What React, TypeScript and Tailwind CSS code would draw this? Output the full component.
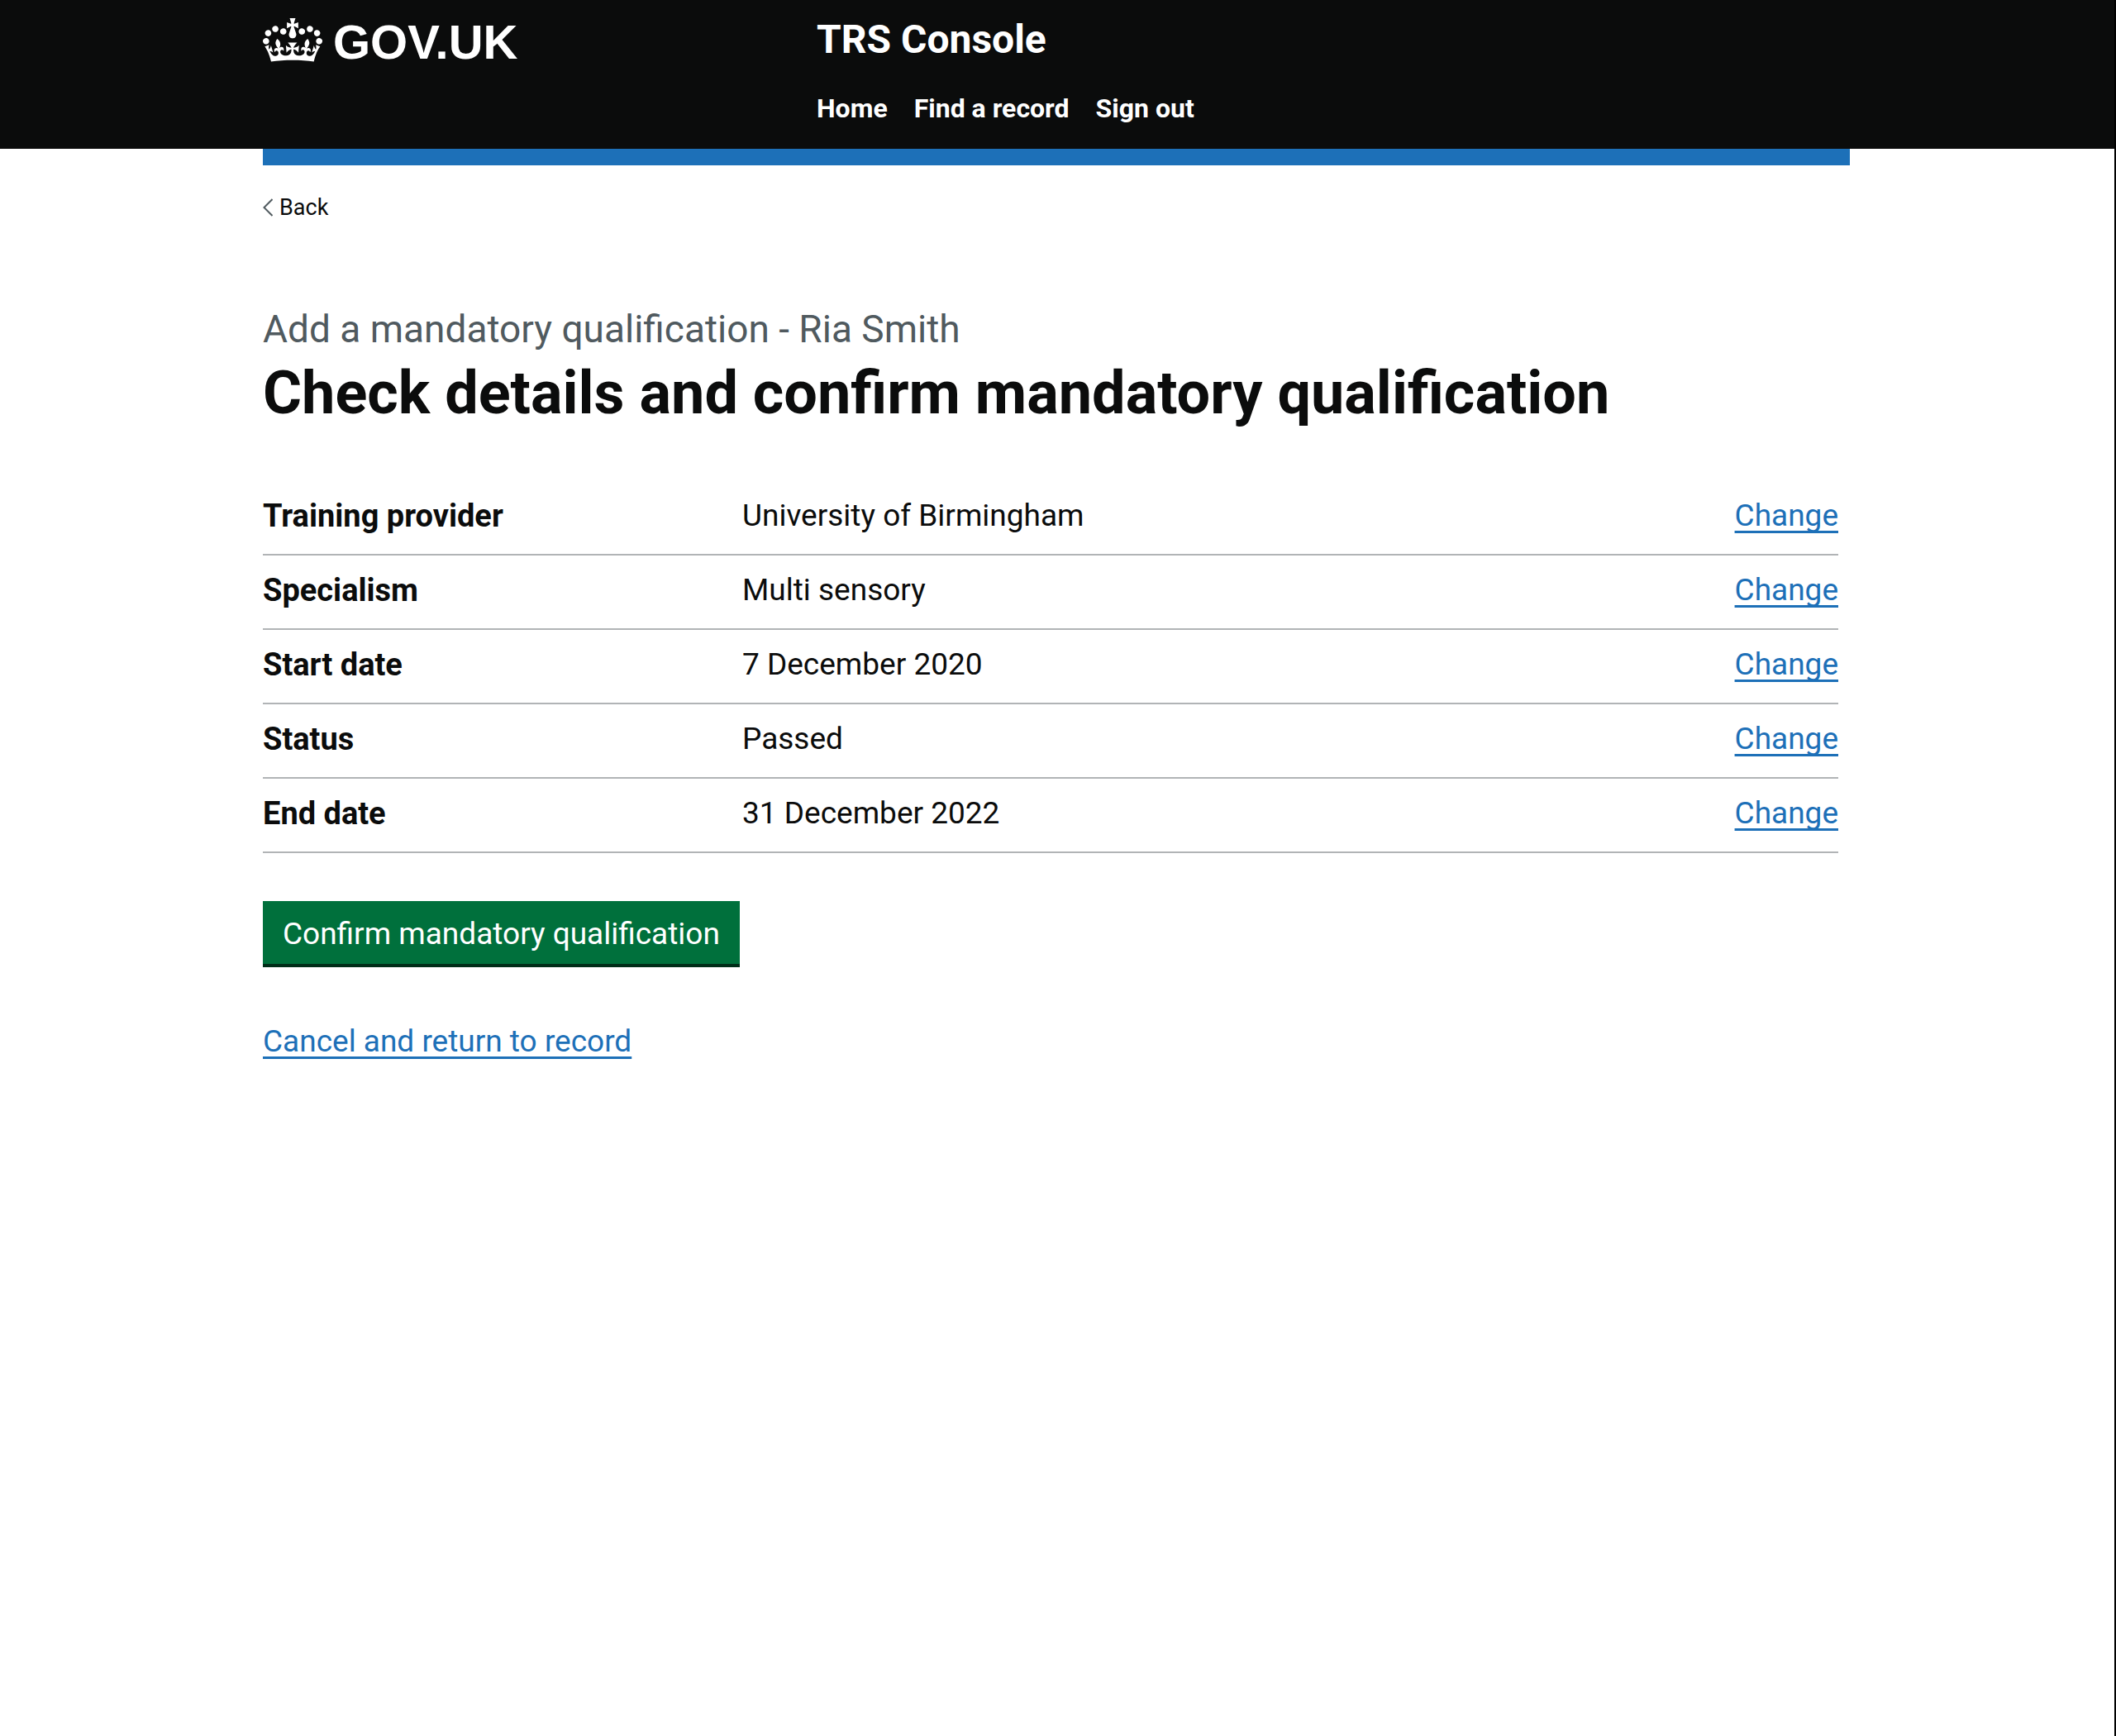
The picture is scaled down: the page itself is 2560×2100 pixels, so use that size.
const details = [
  { label: "Training provider", value: "University of Birmingham" },
  { label: "Specialism", value: "Multi sensory" },
  { label: "Start date", value: "7 December 2020" },
  { label: "Status", value: "Passed" },
  { label: "End date", value: "31 December 2022" },
];

const navigation = ["Home", "Find a record", "Sign out"];

const linkClasses =
  "text-[#1d70b8] underline decoration-[3px] underline-offset-[6px] [text-decoration-skip-ink:none] hover:text-[#003078]";

function Crown() {
  return (
    <svg aria-hidden="true" viewBox="0 0 132 97" className="mt-0.5 h-[53px] w-[72px] shrink-0" fill="currentColor">
      <path
        fillRule="evenodd"
        d="M25 30.2c3.5 1.5 7.7-.2 9.1-3.7 1.5-3.6-.2-7.8-3.9-9.2-3.6-1.4-7.6.3-9.1 3.9-1.4 3.5.3 7.5 3.9 9zM9 39.5c3.6 1.5 7.8-.2 9.2-3.7 1.5-3.6-.2-7.8-3.9-9.1-3.6-1.5-7.6.2-9.1 3.8-1.4 3.5.3 7.5 3.8 9zM4.4 57.2c3.5 1.5 7.7-.2 9.1-3.8 1.5-3.6-.2-7.7-3.9-9.1-3.5-1.5-7.6.3-9.1 3.8-1.4 3.5.3 7.6 3.9 9.1zm38.3-21.4c3.5 1.5 7.7-.2 9.1-3.8 1.5-3.6-.2-7.7-3.9-9.1-3.6-1.5-7.6.3-9.1 3.8-1.3 3.6.4 7.7 3.9 9.1zm64.4-5.6c-3.6 1.5-7.8-.2-9.1-3.7-1.5-3.6.2-7.8 3.8-9.2 3.6-1.4 7.7.3 9.2 3.9 1.3 3.5-.4 7.5-3.9 9zm15.9 9.3c-3.6 1.5-7.7-.2-9.1-3.7-1.5-3.6.2-7.8 3.7-9.1 3.6-1.5 7.7.2 9.2 3.8 1.5 3.5-.3 7.5-3.8 9zm4.7 17.7c-3.6 1.5-7.8-.2-9.2-3.8-1.5-3.6.2-7.7 3.9-9.1 3.6-1.5 7.7.3 9.2 3.8 1.3 3.5-.4 7.6-3.9 9.1zM89.3 35.8c-3.6 1.5-7.8-.2-9.2-3.8-1.4-3.6.2-7.7 3.9-9.1 3.6-1.5 7.7.3 9.2 3.8 1.4 3.6-.3 7.7-3.9 9.1zM69.7 17.7l8.9 4.7V9.3l-8.9 2.8c-.2-.3-.5-.6-.9-.9L72.4 0H59.6l3.5 11.2c-.3.3-.6.5-.9.9l-8.8-2.8v13.1l8.8-4.7c.3.3.6.7.9.9l-5 15.4v.1c-.2.8-.4 1.6-.4 2.4 0 4.1 3.1 7.5 7 8.1h.2c.3 0 .7.1 1 .1.4 0 .7 0 1-.1h.2c4-.6 7.1-4.1 7.1-8.1 0-.8-.1-1.7-.4-2.4V34l-5.1-15.4c.4-.2.7-.6 1-.9zM66 92.8c16.9 0 32.8 1.1 47.1 3.2 4-16.9 8.9-26.7 14-33.5l-9.6-3.4c1 4.9 1.1 7.2 0 10.2-1.5-1.4-3-4.3-4.2-8.7L108.6 76c2.8-2 5-3.2 7.5-3.3-4.4 9.4-10 11.9-13.6 11.2-4.3-.8-6.3-4.6-5.6-7.9 1-4.7 5.7-5.9 8-.5 4.3-8.7-3-11.4-7.6-8.8 7.1-7.2 7.9-13.5 2.1-21.1-8 6.1-8.1 12.3-4.5 20.8-4.7-5.4-12.1-2.5-9.5 6.2 3.4-5.2 7.9-2 7.2 3.1-.6 4.3-6.4 7.8-13.5 7.2-10.3-.9-10.9-8-11.2-13.8 2.5-.5 7.1 1.8 11 7.3L80.2 60c-4.1 4.4-8 5.3-12.3 5.4 1.4-4.4 8-11.6 8-11.6H55.5s6.4 7.2 7.9 11.6c-4.2-.1-8-1-12.3-5.4l1.4 16.4c3.9-5.5 8.5-7.7 10.9-7.3-.3 5.8-.9 12.8-11.1 13.8-7.2.6-12.9-2.9-13.5-7.2-.7-5 3.8-8.3 7.1-3.1 2.7-8.7-4.6-11.6-9.4-6.2 3.7-8.5 3.6-14.7-4.6-20.8-5.8 7.6-5 13.9 2.2 21.1-4.7-2.6-11.9.1-7.7 8.8 2.3-5.5 7.1-4.2 8.1.5.7 3.3-1.3 7.1-5.7 7.9-3.5.7-9-1.8-13.5-11.2 2.5.1 4.7 1.3 7.5 3.3l-4.7-15.4c-1.2 4.4-2.7 7.2-4.3 8.7-1.1-3-.9-5.3 0-10.2l-9.5 3.4c5 6.9 9.9 16.7 14 33.5 14.8-2.1 30.8-3.2 47.7-3.2z"
      />
    </svg>
  );
}

function Header() {
  return (
    <header className="bg-[#0b0c0c] pr-0.5 text-white">
      <div className="mx-auto flex max-w-[1920px] pt-[18px] pb-[29px]">
        <div className="w-[670px] shrink-0 pt-0.5">
          <a href="#" className="inline-flex items-start gap-[13px]">
            <Crown />
            <span className="font-['Liberation_Sans',sans-serif] text-[58px] leading-[62px] font-bold">GOV.UK</span>
          </a>
        </div>
        <div>
          <a href="#" className="block text-[48px] leading-[60px] font-bold">
            TRS Console
          </a>
          <nav aria-label="Menu" className="mt-[33px]">
            <ul className="flex gap-8 text-[32px] leading-[40px] font-bold">
              {navigation.map((item) => (
                <li key={item}>
                  <a href="#">{item}</a>
                </li>
              ))}
            </ul>
          </nav>
        </div>
      </div>
    </header>
  );
}

function BackLink() {
  return (
    <a href="#" className="mt-[31px] inline-flex items-center gap-2 text-[27px] leading-[40px]">
      <svg
        aria-hidden="true"
        viewBox="0 0 12 22"
        className="h-[22px] w-3"
        fill="none"
        stroke="#505a5f"
        strokeWidth="2"
      >
        <path d="M11.5 1 1.5 11l10 10" />
      </svg>
      Back
    </a>
  );
}

function SummaryList() {
  return (
    <dl className="mt-[66px] mr-3.5 text-[37px] leading-[50px]">
      {details.map(({ label, value }) => (
        <div key={label} className="flex border-b-2 border-[#b1b4b6] pt-[17px] pb-[21px]">
          <dt className="w-[580px] shrink-0 text-[38px] font-bold">{label}</dt>
          <dd className="grow">{value}</dd>
          <dd>
            <a href="#" aria-label={`Change ${label.toLowerCase()}`} className={linkClasses}>
              Change
            </a>
          </dd>
        </div>
      ))}
    </dl>
  );
}

export default function App() {
  return (
    <div className="min-h-screen border-r-2 border-black bg-white font-['Roboto',sans-serif] text-[#0b0c0c]">
      <Header />
      <div className="pr-0.5">
        <div className="mx-auto max-w-[1920px]">
          <div className="h-5 bg-[#1d70b8]" />
          <BackLink />
          <main className="mt-[97px]">
            <p className="text-[46px] leading-[60px] text-[#505a5f]">Add a mandatory qualification - Ria Smith</p>
            <h1 className="mt-2 text-[72px] leading-[80px] font-bold">
              Check details and confirm mandatory qualification
            </h1>
            <SummaryList />
            <button
              type="button"
              className="mt-[58px] block border-b-4 border-[#002d18] bg-[#00703c] px-6 pt-[15px] pb-[11px] text-[37px] leading-[50px] text-white hover:bg-[#005a30]"
            >
              Confirm mandatory qualification
            </button>
            <p className="mt-[65px] text-[37px] leading-[50px]">
              <a href="#" className={linkClasses}>
                Cancel and return to record
              </a>
            </p>
          </main>
        </div>
      </div>
    </div>
  );
}
